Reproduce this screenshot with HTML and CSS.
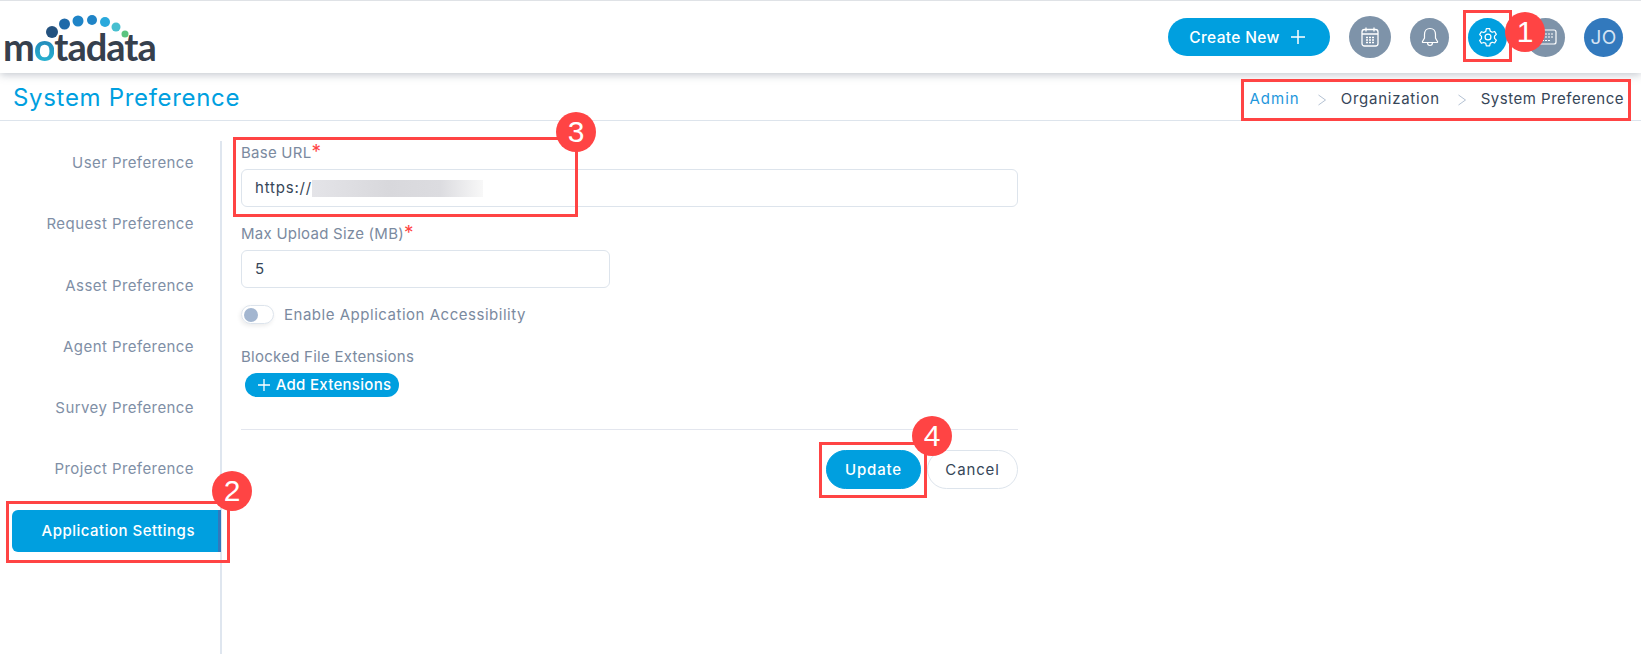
FILE: index.html
```html
<!DOCTYPE html>
<html>
<head>
<meta charset="utf-8" />
<title>System Preference</title>
<link rel="stylesheet" href="styles.css">
</head>
<body>
<div class="header">
	<div class="logo">
		<svg class="logo-dots" width="160" height="44" viewBox="0 0 160 44">
			<circle cx="52" cy="31" r="6" fill="#24527f"/>
			<circle cx="64.500" cy="23" r="5.500" fill="#1f6aa9"/>
			<circle cx="78" cy="20" r="5.500" fill="#1f84c7"/>
			<circle cx="92" cy="19" r="5" fill="#1f84c7"/>
			<circle cx="105" cy="21" r="5" fill="#2aa9dc"/>
			<circle cx="116" cy="26" r="4.500" fill="#47bfd0"/>
			<circle cx="125" cy="33" r="3.500" fill="#5cc47f"/>
		</svg>
		<div class="logo-text">m<span class="logo-o">o</span>tadata</div>
	</div>
	<div class="header-right">
		<a class="create-btn">Create New
			<svg width="16" height="16" viewBox="0 0 16 16"><path d="M8 1v14M1 8h14" stroke="#fff" stroke-width="1.500" fill="none"/></svg>
		</a>
		<span class="circle cal">
			<svg width="20" height="22" viewBox="0 0 20 22" fill="none" stroke="#fff" stroke-width="1.300"><rect x="2" y="3.500" width="16" height="16.500" rx="2.500"/><path d="M2 8h16M6 1.500v4M14 1.500v4"/><path d="M6 11.500h2M9 11.500h2M12 11.500h2M6 14h2M9 14h2M12 14h2M6 16.500h2M9 16.500h2M12 16.500h2" stroke-width="1.600"/></svg>
		</span>
		<span class="circle">
			<svg width="20" height="22" viewBox="0 0 20 22" fill="none" stroke="#fff" stroke-width="1.200"><path d="M10 2.500c-3.500 0-5.500 2.700-5.500 6v3.500L2.500 15.500c-.3.600 0 1 .6 1h13.800c.6 0 .9-.4.600-1L15.500 12V8.500c0-3.300-2-6-5.500-6z"/><path d="M7.500 16.500c0 1.800 1.100 3 2.500 3s2.500-1.200 2.500-3"/></svg>
		</span>
		<span class="circle active">
			<svg width="20" height="20" viewBox="0 0 24 24" fill="none" stroke="#fff" stroke-width="1.500" stroke-linejoin="round"><circle cx="12" cy="12" r="3.500"/><path d="M10 2h4l.7 3 2.300 1.300 3-.9 2 3.500-2.200 2.100v2.600l2.200 2.100-2 3.500-3-.9-2.300 1.300-.7 3h-4l-.7-3L7 18.600l-3 .9-2-3.500 2.200-2.100v-2.600L2 9.200l2-3.500 3 .9 2.300-1.300z"/></svg>
		</span>
		<span class="circle">
			<svg width="24" height="18" viewBox="0 0 24 18" fill="none" stroke="#fff" stroke-width="1.200"><rect x="2" y="2" width="20" height="14" rx="2"/><path d="M5 6h14M5 9h14M8 12.500h8" stroke-dasharray="2 1"/></svg>
		</span>
		<span class="circle avatar">JO</span>
	</div>
</div>

<div class="title-bar">
	<h1>System Preference</h1>
	<div class="crumbs">
		<a>Admin</a>
		<svg width="10" height="12" viewBox="0 0 10 12"><path d="M1.500 1l7 5-7 5" fill="none" stroke="#b4c2d3" stroke-width="1"/></svg>
		<span class="org">Organization</span>
		<svg width="10" height="12" viewBox="0 0 10 12"><path d="M1.500 1l7 5-7 5" fill="none" stroke="#b4c2d3" stroke-width="1"/></svg>
		<span>System Preference</span>
	</div>
</div>

<div class="main">
	<ul class="side">
		<li>User Preference</li>
		<li>Request Preference</li>
		<li>Asset Preference</li>
		<li>Agent Preference</li>
		<li>Survey Preference</li>
		<li>Project Preference</li>
		<li class="on">Application Settings</li>
	</ul>
	<div class="form">
		<label class="lbl">Base URL<i>*</i></label>
		<div class="field">https://<span class="blur"></span></div>
		<label class="lbl">Max Upload Size (MB)<i>*</i></label>
		<div class="field short">5</div>
		<div class="toggle-row">
			<span class="toggle"><b></b></span>
			Enable Application Accessibility
		</div>
		<label class="lbl blocked">Blocked File Extensions</label>
		<a class="add-btn">
			<svg width="14" height="14" viewBox="0 0 14 14"><path d="M7 1v12M1 7h12" stroke="#fff" stroke-width="1.300" fill="none"/></svg>
			Add Extensions
		</a>
		<div class="actions">
			<a class="btn primary">Update</a>
			<a class="btn">Cancel</a>
		</div>
	</div>
</div>

<div class="mark-box box1"></div>
<div class="mark-box box2"></div>
<div class="mark-box box3"></div>
<div class="mark-box box4"></div>
<div class="mark-box box5"></div>
<span class="num n1">1</span>
<span class="num n2">2</span>
<span class="num n3">3</span>
<span class="num n4">4</span>
</body>
</html>
```

FILE: styles.css
```css
*{ margin:0; padding:0; box-sizing:border-box;}
li{ list-style:none;}
html,body{ height:100%;}
body{ background:#fff; font-family:"Inter","Liberation Sans",sans-serif; color:#364658; position:relative; overflow:hidden;}

.header{ height:73px; border-top:1px solid #dfe2e6; display:flex; justify-content:space-between; align-items:center; box-shadow:0 2px 8px rgba(90,100,120,.35); position:relative; padding-right:18px;}
.logo{ width:160px; height:72px; position:relative;}
.logo-dots{ position:absolute; left:0; top:0;}
.logo-text{ position:absolute; left:3px; top:23px; font:700 38px/44px "Lato","Liberation Sans",sans-serif; letter-spacing:-1px; color:#36404d;}
.logo-o{ background:linear-gradient(180deg,#1f6aa9,#2ac0d8); -webkit-background-clip:text; background-clip:text; color:transparent;}
.header-right{ display:flex; align-items:center;}
.create-btn{ width:162px; height:38px; padding-right:3px; border-radius:19px; background:#009fdf; color:#fff; font-size:15.500px; font-weight:500; letter-spacing:.35px; display:flex; align-items:center; justify-content:center; gap:10px; margin-right:19px;}
.circle{ width:39px; height:39px; border-radius:50%; background:#7e93a9; color:#fff; display:flex; align-items:center; justify-content:center; margin-right:19px; flex:none;}
.circle.cal{ width:42px; height:42px;}
.circle.active{ background:#009fdf;}
.circle.avatar{ background:#3279bd; margin-right:0; font-size:19px; letter-spacing:.3px; color:#d5e3f3;}

.title-bar{ height:48px; border-bottom:1px solid #dde4ec; display:flex; justify-content:space-between; align-items:center; padding:0 17px 0 13px;}
.title-bar h1{ font-size:24px; font-weight:400; color:#009fdf; letter-spacing:.68px; padding-top:1px;}
.crumbs{ display:flex; align-items:center; font-size:15px; letter-spacing:.5px; padding-top:4px;}
.crumbs a{ color:#1f97dc; letter-spacing:1px;}
.crumbs .org{ letter-spacing:.75px;}
.crumbs svg{ margin:2px 14px 0 17px;}

.main{ display:flex;}
.side{ width:222px; height:534px; margin-top:20px; padding-top:1px; border-right:2px solid #dfe6ef; padding-left:12px; flex:none;}
.side li{ height:42px; line-height:42px; margin-bottom:19.300px; padding-right:26px; text-align:right; font-size:15px; letter-spacing:.42px; color:#7f8fa6;}
.side li.on{ background:#009fdf; color:#fff; font-weight:500; letter-spacing:.5px; border-radius:6px 0 0 6px; border-right:3px solid #3279bd; padding-right:23px; margin-right:-1px;}

.form{ width:777px; margin-left:19px; padding-top:22px;}
.lbl{ display:block; height:19px; line-height:17px; font-size:15px; letter-spacing:.25px; color:#7b8aa0;}
.lbl i{ color:#f44; font-style:normal; font-size:19px;}
.field{ height:38px; line-height:36px; border:1px solid #dde4ec; border-radius:6px; padding-left:13px; font-size:15px; letter-spacing:.8px; color:#364658; margin:7px 0 17px; display:flex; align-items:center;}
.field.short{ width:369px; margin-bottom:17px;}
.blur{ width:171px; height:17px; background:linear-gradient(90deg,#e4e4e8,#d8d8dc 45%,#dcdce0 75%,#f8f8f8); display:block;}
.toggle-row{ display:flex; align-items:center; height:18px; font-size:15px; letter-spacing:.52px; color:#7b8aa0; gap:10px;}
.toggle{ width:33px; height:19px; border:1px solid #dde4ec; border-radius:10px; display:block; padding:2px; box-shadow:-1px 2px 4px rgba(0,0,0,.08);}
.toggle b{ width:14px; height:14px; border-radius:50%; background:#a3b6d0; display:block;}
.lbl.blocked{ margin-top:25px;}
.add-btn{ width:154px; height:24px; margin:6px 0 0 4px; padding:0 0 1px 4px; background:#009fdf; color:#fff; font-size:15px; font-weight:500; letter-spacing:.3px; border-radius:12px; display:flex; align-items:center; justify-content:center; gap:5px;}
.actions{ border-top:1px solid #e3e6ee; margin-top:32px; padding-top:20px; display:flex; justify-content:flex-end; gap:6px;}
.btn{ height:39px; line-height:37px; width:91px; border:1px solid #dde4ec; border-radius:20px; text-align:center; font-size:15px; letter-spacing:.85px; color:#364658;}
.btn.primary{ width:95px; background:#009fdf; border-color:#009fdf; color:#fff; font-weight:500;}

/* callouts drawn over the screenshot */
.mark-box{ position:absolute; border:3px solid #f44;}
.box1{ left:1463px; top:10px; width:49px; height:52px;}
.box2{ left:1241px; top:79px; width:390px; height:42px;}
.box3{ left:233px; top:137px; width:345px; height:80px;}
.box4{ left:6px; top:501px; width:224px; height:62px;}
.box5{ left:819px; top:442px; width:108px; height:56px;}
.num{ position:absolute; width:40px; height:40px; border-radius:50%; background:#f44; color:#fff; font:400 30px/40px "Liberation Sans",sans-serif; text-align:center;}
.n1{ left:1505px; top:12px;}
.n2{ left:212px; top:471px;}
.n3{ left:556px; top:112px;}
.n4{ left:912px; top:416px;}
```
